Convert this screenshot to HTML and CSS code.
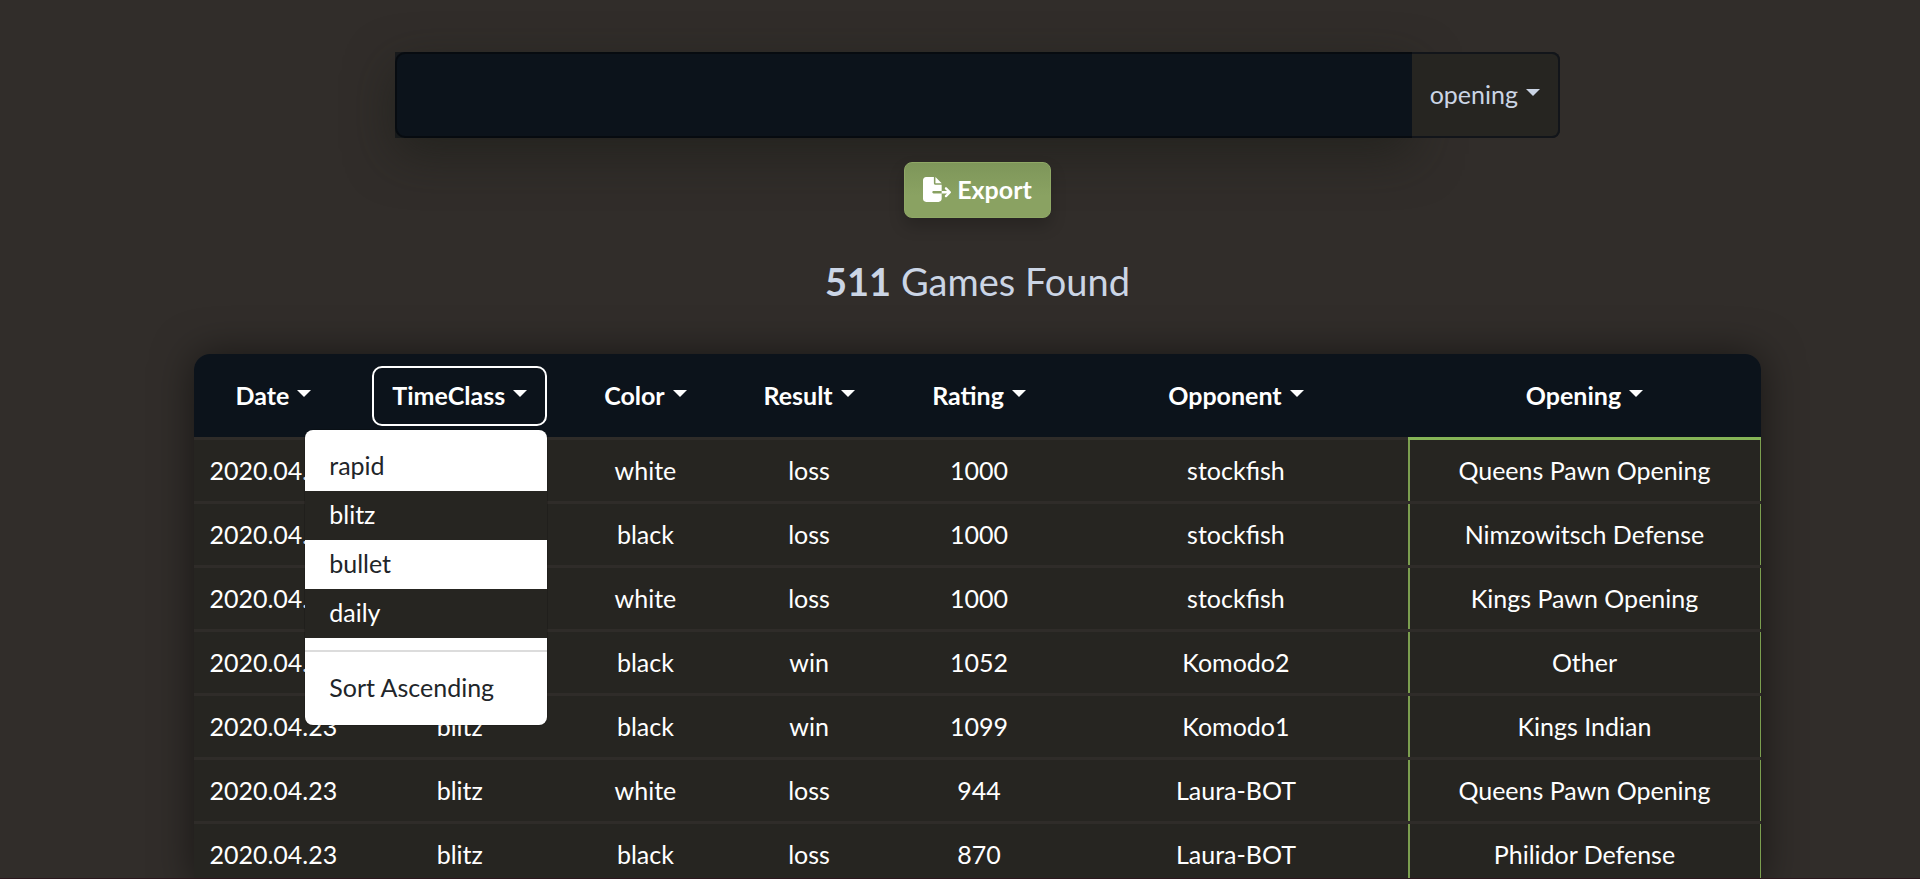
FILE: index.html
```html
<!DOCTYPE html>
<html lang="en">
<head>
<meta charset="utf-8">
<title>Games</title>
<link rel="stylesheet" href="styles.css">
</head>
<body>
<main class="page">
  <form class="search">
    <input class="search-input" type="text" aria-label="Search games">
    <button class="search-field caret" type="button">opening</button>
  </form>
  <button class="export" type="button">
    <svg class="export-icon" viewBox="0 0 576 512" aria-hidden="true"><path fill="currentColor" d="M0 64C0 29 29 0 64 0h160v128c0 18 14 32 32 32h128v128H216c-13 0-24 11-24 24s11 24 24 24h168v112c0 35-29 64-64 64H64c-35 0-64-29-64-64zM384 336v-48h110l-39-39c-9-9-9-25 0-34s25-9 34 0l80 80c9 9 9 25 0 34l-80 80c-9 9-25 9-34 0s-9-25 0-34l39-39zm0-208H256V0z"/></svg>
    Export
  </button>
  <h2 class="count"><strong>511</strong> Games Found</h2>
  <table class="games">
    <colgroup><col class="c-date"><col class="c-time"><col class="c-color"><col class="c-result"><col class="c-rating"><col class="c-opponent"><col class="c-opening"></colgroup>
    <thead>
      <tr>
        <th><button class="head caret" type="button">Date</button></th>
        <th>
          <div class="dropdown">
            <button class="head caret open" type="button" aria-expanded="true">TimeClass</button>
            <div class="menu">
              <button class="item" type="button">rapid</button>
              <button class="item active" type="button">blitz</button>
              <button class="item" type="button">bullet</button>
              <button class="item active" type="button">daily</button>
              <hr class="divider">
              <button class="item" type="button">Sort Ascending</button>
            </div>
          </div>
        </th>
        <th><button class="head caret" type="button">Color</button></th>
        <th><button class="head caret" type="button">Result</button></th>
        <th><button class="head caret" type="button">Rating</button></th>
        <th><button class="head caret" type="button">Opponent</button></th>
        <th><button class="head caret" type="button">Opening</button></th>
      </tr>
    </thead>
    <tbody>
      <tr><td>2020.04.23</td><td>blitz</td><td>white</td><td>loss</td><td>1000</td><td>stockfish</td><td>Queens Pawn Opening</td></tr>
      <tr><td>2020.04.23</td><td>blitz</td><td>black</td><td>loss</td><td>1000</td><td>stockfish</td><td>Nimzowitsch Defense</td></tr>
      <tr><td>2020.04.23</td><td>blitz</td><td>white</td><td>loss</td><td>1000</td><td>stockfish</td><td>Kings Pawn Opening</td></tr>
      <tr><td>2020.04.23</td><td>blitz</td><td>black</td><td>win</td><td>1052</td><td>Komodo2</td><td>Other</td></tr>
      <tr><td>2020.04.23</td><td>blitz</td><td>black</td><td>win</td><td>1099</td><td>Komodo1</td><td>Kings Indian</td></tr>
      <tr><td>2020.04.23</td><td>blitz</td><td>white</td><td>loss</td><td>944</td><td>Laura-BOT</td><td>Queens Pawn Opening</td></tr>
      <tr><td>2020.04.23</td><td>blitz</td><td>black</td><td>loss</td><td>870</td><td>Laura-BOT</td><td>Philidor Defense</td></tr>
    </tbody>
  </table>
</main>
</body>
</html>
```
FILE: styles.css
```css
* { box-sizing: border-box; }

html { overflow: hidden; }

body {
  margin: 0;
  height: 100vh;
  overflow: hidden;
  border-bottom: 1px solid #2c181e;
  background: #312d2a;
  color: #fff;
  font: 25px/36px Lato, "Open Sans", sans-serif;
}

button { font: inherit; color: inherit; cursor: pointer; }

.page {
  display: flex;
  flex-direction: column;
  align-items: center;
  height: 100%;
  overflow: hidden;
  padding: 52px 0 0 35px;
}

.page > * { flex-shrink: 0; }

.caret::after {
  content: "";
  display: inline-block;
  margin-left: 8px;
  vertical-align: 8px;
  border-top: 7px solid;
  border-left: 7px solid transparent;
  border-right: 7px solid transparent;
}

.search {
  display: flex;
  width: 61.8%;
  height: 86px;
  border-radius: 0 8px 8px 0;
  background: #171a1d;
}

.search-input {
  flex: 1;
  min-width: 0;
  padding: 0 20px;
  border: 2px solid #070b10;
  border-right: 0;
  border-radius: 10px 0 0 10px;
  background: #0c131b;
  color: #cbd5e5;
  font: inherit;
  box-shadow: 0 16px 48px rgba(26, 28, 24, 0.6);
}

.search-field {
  position: relative;
  padding: 0 18px 2px;
  border: 2px solid #12151a;
  border-left: 0;
  border-radius: 0 8px 8px 0;
  background: #262521;
  color: #cbd5e5;
}

.export {
  display: flex;
  align-items: center;
  gap: 6px;
  height: 56px;
  margin-top: 24px;
  padding: 0 18px 2px;
  border: 1px solid #8fa866;
  border-radius: 8px;
  background: linear-gradient(#7e965a, #8aa262 60%);
  font-weight: 700;
  box-shadow: 0 8px 16px rgba(0, 0, 0, 0.2);
}

.export-icon { width: 28px; height: 25px; }

.count {
  margin: 39px 0 49px;
  color: #cbd5e5;
  font-size: 38px;
  font-weight: 400;
  line-height: 48px;
}

.games {
  width: 83.1%;
  table-layout: fixed;
  border-spacing: 0;
  border-radius: 16px 16px 0 0;
  text-align: center;
  box-shadow: 0 0 40px rgba(0, 0, 0, 0.5);
}

.c-date { width: 10.1%; }
.c-time { width: 13.7%; }
.c-color { width: 10%; }
.c-result { width: 10.9%; }
.c-rating { width: 10.8%; }
.c-opponent { width: 22%; }
.c-opening { width: 22.5%; }

.games th {
  height: 83px;
  padding: 0;
  background: #0c131b;
}

.games th:first-child { border-radius: 16px 0 0 0; }
.games th:last-child { border-radius: 0 16px 0 0; }

.head {
  padding: 9px 18px 11px;
  border: 2px solid transparent;
  border-radius: 10px;
  background: transparent;
  font-weight: 700;
  white-space: nowrap;
}

.head.open { border-color: #fff; }

.games td {
  height: 64px;
  padding: 0 0 2px;
  border-top: 3px solid #2f2c29;
  background: #262521;
}

.games td:last-child {
  box-shadow: inset 2px 0 #7b9e4f, inset -1px 0 #7b9e4f;
}

.games tbody tr:first-child td:last-child { border-top-color: #86b557; }

.dropdown {
  position: relative;
  display: inline-block;
}

.menu {
  position: absolute;
  z-index: 2;
  top: calc(100% + 4px);
  right: 0;
  width: 242px;
  padding: 12px 0;
  border-radius: 8px;
  background: #fff;
  box-shadow: 0 0 0 1px rgba(0, 0, 0, 0.15);
  color: #212529;
  font-weight: 400;
}

.item {
  display: block;
  width: 100%;
  height: 49px;
  padding: 0 24px 2px;
  border: 0;
  background: transparent;
  text-align: left;
}

.item.active {
  background: #262521;
  color: #fff;
}

.divider {
  margin: 12px 0;
  border: 0;
  border-top: 2px solid #dcdcdc;
}
```
